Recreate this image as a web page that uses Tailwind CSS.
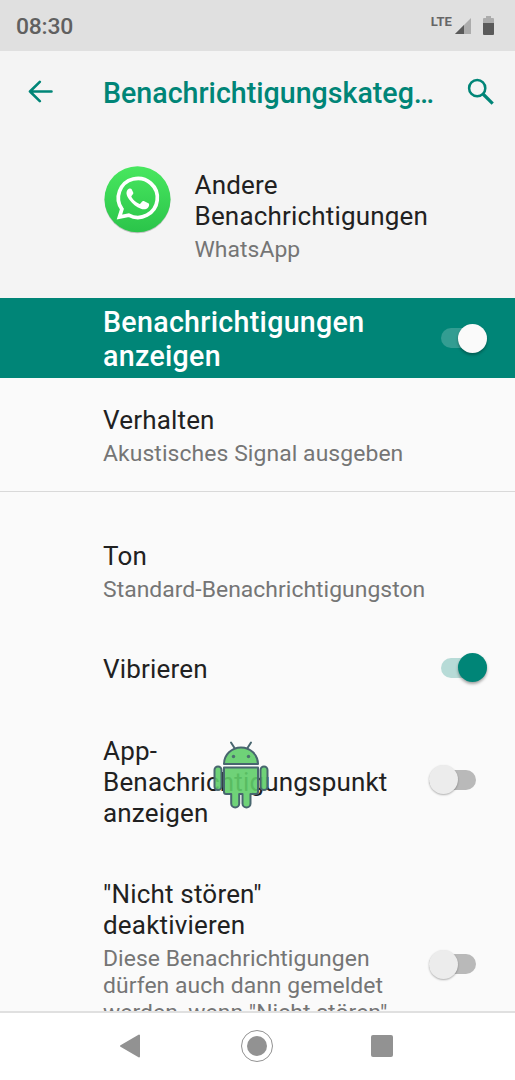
<!DOCTYPE html>
<html lang="de">
<head>
  <meta charset="UTF-8" />
  <meta name="viewport" content="width=device-width, initial-scale=1.0">
  <title>Benachrichtigungskategorie</title>
  <script src="https://cdn.jsdelivr.net/npm/@tailwindcss/browser@4"></script>
</head>
<body class="w-[515px] h-[1080px] overflow-hidden flex flex-col bg-[#fafafa] font-['Roboto',sans-serif] text-[#212121] text-[26px] leading-[31px] tracking-[0.18px]">

  <!-- status bar -->
  <div class="h-[51px] shrink-0 bg-[#e0e0e0] flex items-center justify-between pl-4 pr-[21px]">
    <span class="pt-px text-[22.9px] font-medium tracking-[-0.2px] text-[#606060]">08:30</span>
    <div class="flex items-center">
      <span class="text-[13px] font-bold leading-none text-[#666] tracking-[0.1px] mb-2">LTE</span>
      <svg class="w-4 h-4 ml-[3px]" viewBox="0 0 16 16">
        <path d="M16 0v16H0z" fill="#acacac"/>
        <path d="M9 7v9H0z" fill="#5a5a5a"/>
      </svg>
      <svg class="w-[11px] h-[19px] ml-3" viewBox="0 0 11 19">
        <path d="M3 0h5v2h2a1 1 0 0 1 1 1v4H0V3a1 1 0 0 1 1-1h2z" fill="#acacac"/>
        <path d="M0 7h11v11a1 1 0 0 1-1 1H1a1 1 0 0 1-1-1z" fill="#5a5a5a"/>
      </svg>
    </div>
  </div>

  <header class="h-[247px] shrink-0 bg-[#f4f4f4]">
    <div class="h-[82px] flex items-center text-[#008577]">
      <svg class="w-[25px] h-[23px] mb-[2px] ml-[28px]" viewBox="0 0 25 23" fill="none" stroke="currentColor" stroke-width="2.6" stroke-linecap="round" stroke-linejoin="round">
        <path d="M23.5 11.5H2M11.8 1.8 2 11.5l9.8 9.7"/>
      </svg>
      <h1 class="ml-[50px] w-[350px] pt-[2px] text-[28.6px] leading-[34px] font-medium tracking-normal whitespace-nowrap">Benachrichtigungskateg…</h1>
      <svg class="w-[27px] h-[27px] mb-[2px] ml-[14px]" viewBox="0 0 27 27" fill="none" stroke="currentColor">
        <circle cx="10.2" cy="10.2" r="8.1" stroke-width="2.5"/>
        <path d="M16 16 25.7 25.7" stroke-width="3.2"/>
      </svg>
    </div>
    <div class="flex pt-[33px] pl-[104px]">
      <svg class="w-[67px] h-[69px] shrink-0" viewBox="0 0 67 69">
        <defs>
          <linearGradient id="green" x1="0" y1="0" x2="0" y2="1">
            <stop offset="0" stop-color="#48e75f"/>
            <stop offset="1" stop-color="#2bc44a"/>
          </linearGradient>
        </defs>
        <circle cx="33.5" cy="34.2" r="33" fill="#c2c2c2"/>
        <circle cx="33.5" cy="33.2" r="33" fill="url(#green)"/>
        <path d="M15.4 51.1 17.9 43.1A19.5 19.5 0 1 1 24.7 49.1z" fill="none" stroke="#fff" stroke-width="3.7"/>
        <path d="M26.2 22.6c-.6-.2-1.5-.1-2.1.6-1 1-1.700 2.500-1.600 4.300.2 2.500 1.700 4.600 3.100 6.500 3 4 6.600 7 11.300 8.700 3 1.100 5.400.5 7-1 .9-.9 1.400-2.400 1.200-3.500-.1-.6-.5-.8-1.300-1.200l-4-1.900c-.8-.3-1.200-.1-1.700.5l-1.600 2c-.4.4-.8.5-1.400.2-3.300-1.400-5.800-3.600-7.600-6.700-.3-.5-.2-.8.2-1.300.7-.8 1.400-1.500 1.600-2.200.2-.5 0-.9-.2-1.400l-1.600-3.200c-.3-.3-.7-.3-1.300-.4z" fill="#fff"/>
      </svg>
      <div class="ml-[23.5px] pt-[4px]">
        <p>Andere<br>Benachrichtigungen</p>
        <p class="mt-1 text-[22.9px] leading-[27px] tracking-[0.05px] text-[#757575]">WhatsApp</p>
      </div>
    </div>
  </header>

  <div class="h-20 shrink-0 bg-[#008577] flex items-center justify-between pl-[103px] pr-7">
    <p class="pt-[2px] text-[28.6px] leading-[34.4px] font-medium tracking-[0.3px] text-white">Benachrichtigungen<br>anzeigen</p>
    <div class="flex items-center w-[46px] h-5 rounded-full bg-[#339d92] justify-end">
      <div class="w-[29px] h-[29px] shrink-0 rounded-full bg-[#fafafa] shadow-[0_2px_3px_rgba(0,0,0,0.3)]"></div>
    </div>
  </div>

  <main class="h-[633px] shrink-0 overflow-hidden">
    <section class="h-[114px] pt-[27px] pl-[103px] border-b border-[#d9d9d9]">
      <p>Verhalten</p>
      <p class="mt-1 text-[22.9px] leading-[27px] tracking-[0.09px] text-[#757575]">Akustisches Signal ausgeben</p>
    </section>
    <section class="h-[136px] pt-[49px] pl-[103px]">
      <p>Ton</p>
      <p class="mt-1 text-[22.9px] leading-[27px] tracking-[0.04px] text-[#757575]">Standard-Benachrichtigungston</p>
    </section>
    <section class="h-[79px] flex items-center justify-between pl-[103px] pr-7">
      <p class="pt-1">Vibrieren</p>
      <div class="flex items-center w-[46px] h-5 rounded-full bg-[#b7dbd7] justify-end">
        <div class="w-[29px] h-[29px] shrink-0 rounded-full bg-[#008577] shadow-[0_2px_3px_rgba(0,0,0,0.35)]"></div>
      </div>
    </section>
    <section class="relative h-[146px] flex items-center justify-between pl-[103px] pr-[39px]">
      <p class="pt-[5px]">App-<br>Benachrichtigungspunkt<br>anzeigen</p>
      <div class="flex items-center w-[47px] h-5 mb-px rounded-full bg-[#b9b9b9]">
        <div class="w-[29px] h-[29px] shrink-0 rounded-full bg-[#ececec] shadow-[0_1px_2px_rgba(0,0,0,0.3)]"></div>
      </div>
      <!-- floating robot -->
      <svg class="absolute left-[213px] top-[33px] w-[56px] h-[69px]" viewBox="0 0 56 69" fill="#5fcd69" fill-opacity=".9" stroke="#48666f" stroke-width="2" stroke-linejoin="round" stroke-linecap="round">
        <path d="m18 2.500 3.500 5.500M38 2.500l-3.500 5.500"/>
        <path d="M11 24a17 16.500 0 0 1 34 0z"/>
        <path d="M11 27.500h34v24.500a2 2 0 0 1-2 2h-5.500v9.500a4 4 0 0 1-8 0V54h-3.300v9.500a4 4 0 0 1-8 0V54H13a2 2 0 0 1-2-2z"/>
        <rect x="1.500" y="26.500" width="7" height="23.500" rx="3.500"/>
        <rect x="47.500" y="26.500" width="7" height="23.500" rx="3.500"/>
        <circle cx="20.500" cy="16.500" r="1.700" fill="#48666f" stroke="none"/>
        <circle cx="35.500" cy="16.500" r="1.700" fill="#48666f" stroke="none"/>
      </svg>
    </section>
    <section class="flex justify-between pt-[26px] pl-[103px] pr-[39px]">
      <div class="whitespace-nowrap">
        <p>"Nicht stören"<br>deaktivieren</p>
        <p class="mt-1 text-[22.9px] leading-[27px] tracking-[0.06px] text-[#757575]">Diese Benachrichtigungen<br>dürfen auch dann gemeldet<br>werden, wenn "Nicht stören"</p>
      </div>
      <div class="flex items-center w-[47px] h-5 mt-[75px] rounded-full bg-[#b9b9b9]">
        <div class="w-[29px] h-[29px] shrink-0 rounded-full bg-[#ececec] shadow-[0_1px_2px_rgba(0,0,0,0.3)]"></div>
      </div>
    </section>
  </main>

  <!-- navigation bar -->
  <nav class="h-[69px] shrink-0 bg-white border-t-2 border-[#e0e0e0] flex items-center justify-between pb-[2px] pl-[119px] pr-[122px]">
    <svg class="w-[22px] h-6" viewBox="0 0 22 24"><path d="M20 1.500v21L2 12z" fill="#929292" stroke="#929292" stroke-width="2" stroke-linejoin="round"/></svg>
    <div class="w-8 h-8 ml-[2px] rounded-full border border-[#929292] flex items-center justify-center">
      <div class="w-5 h-5 rounded-full bg-[#929292]"></div>
    </div>
    <div class="w-[22px] h-[22px] rounded-[2px] bg-[#929292]"></div>
  </nav>

</body>
</html>
